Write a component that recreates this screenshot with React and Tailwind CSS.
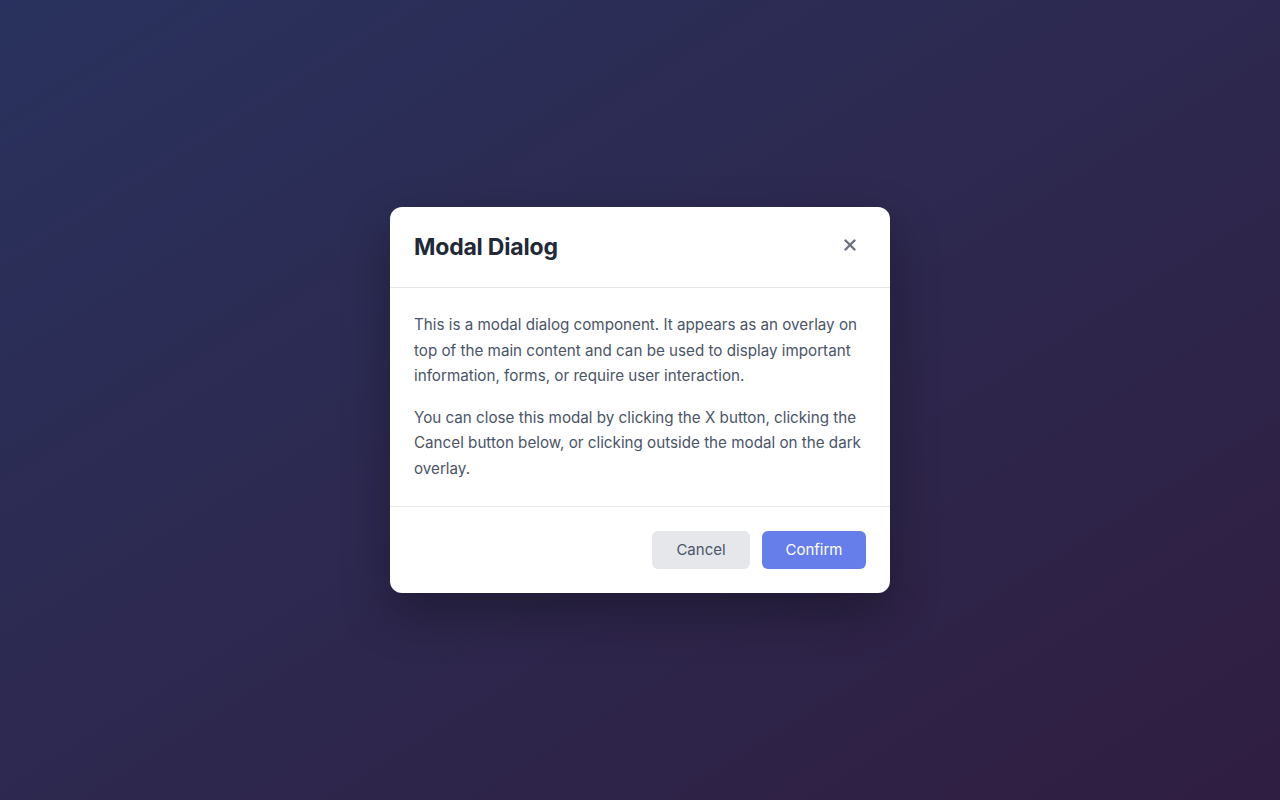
import React, { useState } from 'react';

const CloseIcon = () => (
  <svg width="12" height="12" viewBox="0 0 12 12" fill="none">
    <path d="M1.5 1.5L10.5 10.5M10.5 1.5L1.5 10.5" stroke="currentColor" strokeWidth="2.4" strokeLinecap="round" />
  </svg>
);

const App = () => {
  const [open, setOpen] = useState(true);

  return (
    <div
      className="relative w-full h-[800px] overflow-hidden bg-gradient-to-br from-[#667eea] to-[#764ba2]"
      style={{ fontFamily: 'Inter, "Noto Sans", sans-serif' }}
    >
      {/* dark overlay */}
      <div
        className="absolute inset-0 bg-black/60 flex items-center justify-center"
        onClick={() => setOpen(false)}
      >
        {open && (
          <div
            className="w-[500px] bg-white rounded-xl shadow-[0_20px_50px_rgba(0,0,0,0.3)]"
            onClick={(e) => e.stopPropagation()}
          >
            <div className="flex items-center justify-between px-6 h-[81px] border-b border-[#e5e7eb]">
              <h2 className="text-[23px] font-bold text-[#1f2937] tracking-[-0.2px]">Modal Dialog</h2>
              <button
                className="w-8 h-8 flex items-center justify-center text-[#6b7280] -mt-1"
                onClick={() => setOpen(false)}
              >
                <CloseIcon />
              </button>
            </div>

            <div className="px-6 pt-6 pb-[25px] text-[15.2px] leading-[25.5px] text-[#4a5568] space-y-4">
              <p>
                This is a modal dialog component. It appears as an overlay on top of the main content and can be
                used to display important information, forms, or require user interaction.
              </p>
              <p>
                You can close this modal by clicking the X button, clicking the Cancel button below, or clicking
                outside the modal on the dark overlay.
              </p>
            </div>

            <div className="flex justify-end gap-3 p-6 border-t border-[#e5e7eb]">
              <button
                className="h-[38px] w-[98px] rounded-md bg-[#e5e7eb] text-[#4a5568] text-[15px]"
                onClick={() => setOpen(false)}
              >
                Cancel
              </button>
              <button className="h-[38px] w-[104px] rounded-md bg-[#667eea] text-white text-[15px]">
                Confirm
              </button>
            </div>
          </div>
        )}
      </div>
    </div>
  );
};

export default App;
